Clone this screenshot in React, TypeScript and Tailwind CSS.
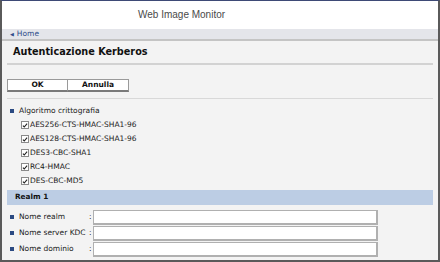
const ALGOS = [
  "AES256-CTS-HMAC-SHA1-96",
  "AES128-CTS-HMAC-SHA1-96",
  "DES3-CBC-SHA1",
  "RC4-HMAC",
  "DES-CBC-MD5",
];

const FIELDS = ["Nome realm", "Nome server KDC", "Nome dominio"];

function Bullet() {
  return <span className="inline-block w-[4px] h-[4px] bg-[#2b4a82] shrink-0" />;
}

function CheckBox() {
  return (
    <span className="w-[8px] h-[8px] border border-[#8a8a8a] bg-white shrink-0 flex items-center justify-center">
      <svg viewBox="0 0 8 8" className="w-[7px] h-[7px]" fill="none" stroke="#222" strokeWidth="1.5">
        <path d="M1.2 4.2l1.8 1.8 3.8-4.6" />
      </svg>
    </span>
  );
}

export default function App() {
  return (
    <div
      className="w-[440px] h-[262px] flex flex-col border-t border-t-[#3e4a76] border-l-2 border-r-2 border-b-2 border-l-[#5a5a5a] border-r-[#5a5a5a] border-b-[#5a5a5a] bg-white overflow-hidden"
      style={{ fontFamily: '"DejaVu Sans", Verdana, sans-serif' }}
    >
      {/* header */}
      <div className="h-[28px] shrink-0 bg-white flex items-center pl-[136px]">
        <span
          className="text-[10px] text-[#4a4a4a] leading-none"
          style={{ fontFamily: '"Liberation Sans", Arial, sans-serif' }}
        >
          Web Image Monitor
        </span>
      </div>

      <div className="h-[10px] shrink-0 bg-[#e4e5ea] flex items-center pl-[8px] gap-[3px] text-[7.5px] text-[#2f4d8a] leading-none">
        <span className="text-[5px]">◀</span>
        <span>Home</span>
      </div>
      <div className="h-[2px] shrink-0 bg-[#c4c4c4]" />

      {/* content */}
      <div className="flex-1 bg-[#f3f3f3] px-[5px] flex flex-col">
        <div className="pt-[5px] pb-[5px] pl-[6px] border-b-2 border-[#d2d2d2]">
          <h1 className="text-[9.7px] font-bold leading-[12px] text-[#111]">Autenticazione Kerberos</h1>
        </div>

        <div className="mt-[14px] flex">
          <button className="w-[61px] h-[13px] bg-white border border-[#9a9a9a] border-b-2 border-b-[#7a7a7a] text-[7.5px] font-bold leading-none text-[#111]">
            OK
          </button>
          <button className="w-[61px] h-[13px] bg-white border border-l-0 border-[#9a9a9a] border-b-2 border-b-[#7a7a7a] text-[7.5px] font-bold leading-none text-[#111]">
            Annulla
          </button>
        </div>
        <div className="mt-[6px] h-px bg-[#d8d8d8]" />

        <div className="mt-[5px] flex flex-col text-[7.5px] text-[#1a1a1a]">
          <div className="h-[14px] flex items-center gap-[5px] pl-[3px]">
            <Bullet />
            <span>Algoritmo crittografia</span>
          </div>
          {ALGOS.map((a) => (
            <div key={a} className="h-[14px] flex items-center gap-[1px] pl-[14px]">
              <CheckBox />
              <span>{a}</span>
            </div>
          ))}
        </div>

        <div className="mt-[2px] h-[15px] bg-[#bccde4] flex items-center pl-[8px]">
          <span className="text-[7.3px] font-bold text-[#111]">Realm 1</span>
        </div>

        <div className="mt-[4px] flex flex-col text-[7.5px] text-[#1a1a1a]">
          {FIELDS.map((f) => (
            <div key={f} className="h-[16px] flex items-center">
              <div className="w-[82px] flex items-center gap-[5px] pl-[3px]">
                <Bullet />
                <span className="whitespace-nowrap">{f}</span>
              </div>
              <span className="w-[4px]">:</span>
              <div className="w-[285px] h-[15px] bg-white border border-[#b0b0b0] border-b-2 border-r-2" />
            </div>
          ))}
        </div>
      </div>
    </div>
  );
}
